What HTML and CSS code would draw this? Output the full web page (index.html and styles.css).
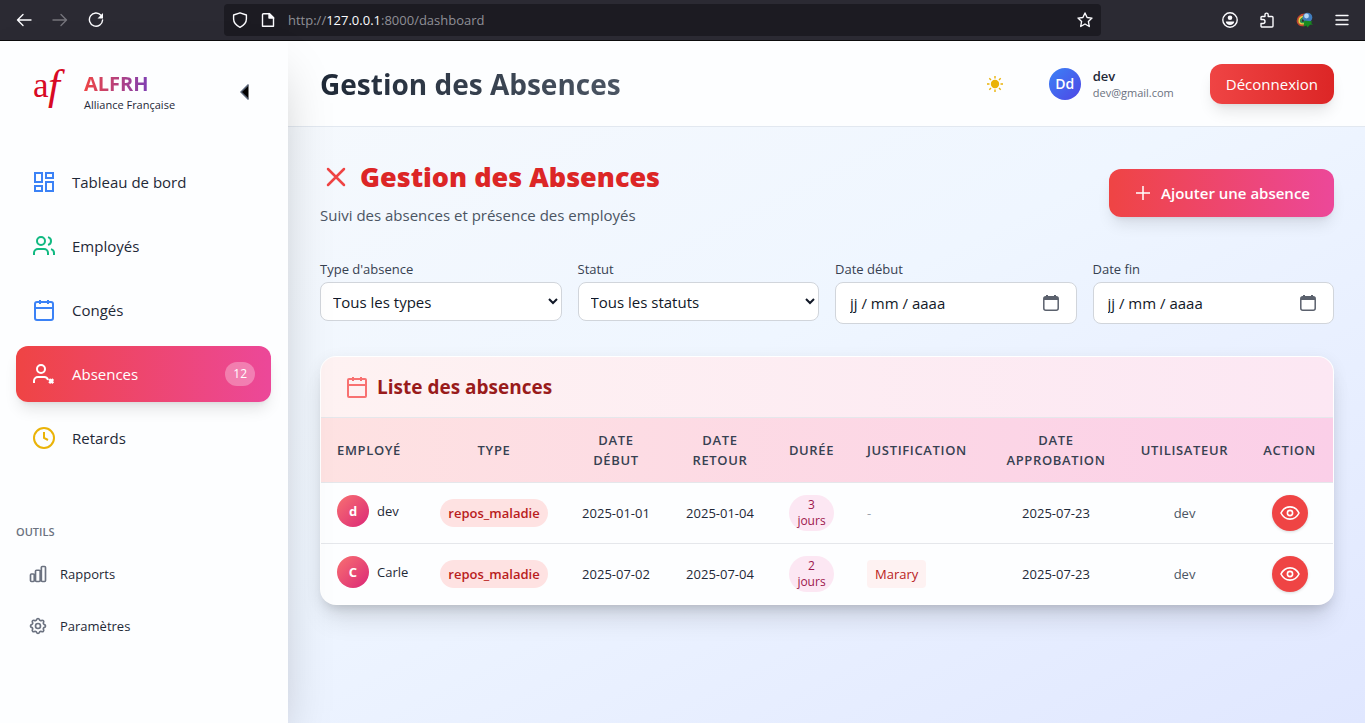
FILE: index.html
```html
<!DOCTYPE html>
<html lang="fr">
<head>
<meta charset="utf-8">
<title>Gestion des Absences</title>
<link rel="stylesheet" href="styles.css">
</head>
<body>
<div class="browser">
  <div class="nav-buttons">
    <button class="tool" aria-label="Précédent"><svg width="16" height="16" viewBox="0 0 16 16"><path d="M15 8H1.500M7 2.500 1.500 8 7 13.500"/></svg></button>
    <button class="tool dim" aria-label="Suivant"><svg width="16" height="16" viewBox="0 0 16 16"><path d="M1 8h13.500M9 2.500 14.500 8 9 13.500"/></svg></button>
    <button class="tool" aria-label="Actualiser"><svg width="16" height="16" viewBox="0 0 16 16"><path d="M13 3.300A6.600 6.600 0 1 0 14.600 8"/><path d="M15 1v5.500H9.500z" fill="currentColor" stroke="none"/></svg></button>
  </div>
  <div class="address">
    <svg width="16" height="16" viewBox="0 0 16 16"><path d="M8 .8 14.400 3v4c0 3.600-3 6.600-6.400 8.300C4.600 13.600 1.600 10.600 1.600 7V3z"/></svg>
    <svg width="16" height="16" viewBox="0 0 16 16"><path d="M3.500 1.700h6l4 4v8.600h-11V2.700a1 1 0 0 1 1-1z"/><path d="M9 1.500 13.700 6H9z" fill="currentColor"/></svg>
    <span class="url">http://<b>127.0.0.1</b>:8000/dashboard</span>
    <button class="tool star" aria-label="Marque-page"><svg width="16" height="16" viewBox="0 0 16 16"><path d="m8 1 2.100 4.500 4.900.6-3.600 3.400.9 5L8 12l-4.300 2.500.9-5L1 6.100l4.900-.6z"/></svg></button>
  </div>
  <div class="extensions">
    <button class="tool" aria-label="Compte"><svg width="16" height="16" viewBox="0 0 16 16"><circle cx="8" cy="8" r="7.200"/><circle cx="8" cy="5.800" r="2.300" fill="currentColor" stroke="none"/><path d="M3.800 9.500h8.400c0 2-2 3.600-4.200 3.600s-4.200-1.600-4.200-3.600z" fill="currentColor" stroke="none"/></svg></button>
    <button class="tool" aria-label="Extensions"><svg width="16" height="16" viewBox="0 0 16 16"><path d="M2 7.500V5.500a1 1 0 0 1 1-1h3V2.700a1.600 1.600 0 0 1 3.200 0v1.800H13a1 1 0 0 1 1 1V14a1 1 0 0 1-1 1H3a1 1 0 0 1-1-1v-2.500h2a2 2 0 0 0 0-4z"/></svg></button>
    <button class="tool" aria-label="Téléchargements"><svg class="globe" width="18" height="16" viewBox="0 0 18 16"><path d="M9 2.500C4 2.500 1.500 6 1.500 9s2.500 5 7 4" stroke="#c64530" stroke-width="1.800"/><path d="M8.500 4.300C5 4.500 3.200 6.500 3.200 9s2 3 5.300 2.600" stroke="#e7d345" stroke-width="1.800"/><path d="M8 6c-2.500.5-3.200 2-3 3.500s1.500 1.200 4 .5" stroke="#2f9e55" stroke-width="1.500"/><circle cx="11.500" cy="5.500" r="4.800" fill="#407cbd"/><circle cx="10.500" cy="4" r="2.400" fill="#b4d7f5"/><path d="m8.500 8.500 8 1-1.500 1.500 2 1.500-3 .2-2.500 2.800-1-2-3 1z" fill="#168a20"/></svg></button>
    <button class="tool" aria-label="Menu"><svg width="14" height="16" viewBox="0 0 14 16"><path d="M1 3.500h12M1 8h12M1 12.500h12"/></svg></button>
  </div>
</div>
<div class="app">
  <aside class="sidebar">
    <div class="brand">
      <svg class="logo" width="36" height="42" viewBox="0 0 36 42" role="img" aria-label="Alliance Française"><text class="logo-a" x="1" y="28">a</text><text class="logo-f" x="16" y="30">f</text></svg>
      <div class="brand-text"><div class="brand-name">ALFRH</div><div class="brand-sub">Alliance Française</div></div>
      <button class="collapse" aria-label="Réduire le menu"><svg width="10" height="18" viewBox="0 0 10 18"><path d="M8.500 2v14L1 9z" fill="#000"/><path d="M8.500 1.500 1 9l7.500 7.500" fill="none" stroke="#566175" stroke-width="1.500"/></svg></button>
    </div>
    <nav class="menu">
      <a class="item blue" href="#"><svg class="icon" viewBox="0 0 24 24"><path d="M3 3h7v9H3zM14 3h7v5h-7zM14 12h7v9h-7zM3 16h7v5H3z"/></svg>Tableau de bord</a>
      <a class="item green" href="#"><svg class="icon" viewBox="0 0 24 24"><path d="M16 21v-2a4 4 0 0 0-4-4H6a4 4 0 0 0-4 4v2M22 21v-2a4 4 0 0 0-3-3.870M16 3.130a4 4 0 0 1 0 7.750"/><circle cx="9" cy="7" r="4"/></svg>Employés</a>
      <a class="item blue" href="#"><svg class="icon" viewBox="0 0 24 24"><rect x="3" y="4" width="18" height="18" rx="2"/><path d="M8 2v4M16 2v4M3 10h18"/></svg>Congés</a>
      <a class="item active" href="#" aria-current="page"><svg class="icon" viewBox="0 0 24 24"><path d="M2 21v-2a4 4 0 0 1 4-4h6a4 4 0 0 1 4 3"/><path d="m17.200 17.200 4 4M21.200 17.200l-4 4" stroke-width="2.600"/><circle cx="9" cy="7" r="4"/></svg>Absences<span class="count">12</span></a>
      <a class="item yellow" href="#"><svg class="icon" viewBox="0 0 24 24"><circle cx="12" cy="12" r="10"/><path d="M12 6v6l4 2"/></svg>Retards</a>
    </nav>
    <div class="tools-title">OUTILS</div>
    <nav class="tools">
      <a href="#"><svg class="small-icon" viewBox="0 0 24 24"><path d="M3 13.100C3 12.500 3.500 12 4.100 12h2.300c.6 0 1.100.5 1.100 1.100v6.800c0 .6-.5 1.100-1.100 1.100H4.100C3.500 21 3 20.500 3 19.900zM9 8.600c0-.6.500-1.100 1.200-1.100h3.200c.7 0 1.200.5 1.200 1.100v11.300c0 .6-.5 1.100-1.200 1.100h-3.200C9.500 21 9 20.500 9 19.900zM16 4.100c0-.6.500-1.100 1.100-1.100h2.800c.6 0 1.100.5 1.100 1.100v15.800c0 .6-.5 1.100-1.100 1.100h-2.800c-.6 0-1.100-.5-1.100-1.100z"/></svg>Rapports</a>
      <a href="#"><svg class="small-icon" viewBox="0 0 24 24"><path d="M10.325 4.317c.426-1.756 2.924-1.756 3.350 0a1.724 1.724 0 0 0 2.573 1.066c1.543-.94 3.310.826 2.370 2.370a1.724 1.724 0 0 0 1.065 2.572c1.756.426 1.756 2.924 0 3.350a1.724 1.724 0 0 0-1.066 2.573c.94 1.543-.826 3.310-2.370 2.370a1.724 1.724 0 0 0-2.572 1.065c-.426 1.756-2.924 1.756-3.350 0a1.724 1.724 0 0 0-2.573-1.066c-1.543.94-3.310-.826-2.370-2.370a1.724 1.724 0 0 0-1.065-2.572c-1.756-.426-1.756-2.924 0-3.350a1.724 1.724 0 0 0 1.066-2.573c-.94-1.543.826-3.310 2.370-2.370.996.608 2.296.07 2.572-1.065z"/><circle cx="12" cy="12" r="3"/></svg>Paramètres</a>
    </nav>
  </aside>
  <div class="content">
    <header class="topbar">
      <h1>Gestion des Absences</h1>
      <button class="theme" aria-label="Changer de thème"><svg width="16" height="16" viewBox="0 0 16 16"><circle cx="8" cy="8" r="4.200" fill="#eab308"/><path d="M8 0v2.500M8 13.500V16M0 8h2.500M13.500 8H16M2.300 2.300 4 4M12 12l1.700 1.700M2.300 13.700 4 12M12 4l1.700-1.700" stroke="#eab308" stroke-width="1.400"/></svg></button>
      <div class="user"><span class="avatar">Dd</span><div><div class="user-name">dev</div><div class="user-mail">dev@gmail.com</div></div></div>
      <button class="logout">Déconnexion</button>
    </header>
    <main>
      <section class="intro">
        <div>
          <h2><svg width="32" height="32" viewBox="0 0 32 32"><path d="m8 8 16 16M24 8 8 24"/></svg>Gestion des Absences</h2>
          <p>Suivi des absences et présence des employés</p>
        </div>
        <button class="add"><svg width="20" height="20" viewBox="0 0 20 20"><path d="M10 3v14M3 10h14"/></svg>Ajouter une absence</button>
      </section>
      <form class="filters">
        <div class="field"><label for="type">Type d'absence</label><select id="type"><option>Tous les types</option></select></div>
        <div class="field"><label for="status">Statut</label><select id="status"><option>Tous les statuts</option></select></div>
        <div class="field"><label for="from">Date début</label><div class="date"><input id="from" type="text" value="jj / mm / aaaa"><svg width="16" height="18" viewBox="0 0 16 18"><rect x=".8" y="2.800" width="14.400" height="13.400" rx="2"/><path d="M1 3h14v3H1zM3 1h2v3H3zM11 1h2v3h-2z" fill="#5b616d" stroke="none"/></svg></div></div>
        <div class="field"><label for="to">Date fin</label><div class="date"><input id="to" type="text" value="jj / mm / aaaa"><svg width="16" height="18" viewBox="0 0 16 18"><rect x=".8" y="2.800" width="14.400" height="13.400" rx="2"/><path d="M1 3h14v3H1zM3 1h2v3H3zM11 1h2v3h-2z" fill="#5b616d" stroke="none"/></svg></div></div>
      </form>
      <section class="card">
        <h3><svg class="icon" viewBox="0 0 24 24"><rect x="3" y="4" width="18" height="18" rx="1"/><path d="M8 2v4M16 2v4M3 10h18"/></svg>Liste des absences</h3>
        <table>
          <colgroup><col class="c-emp"><col class="c-type"><col class="c-date"><col class="c-date"><col class="c-dur"><col class="c-just"><col class="c-app"><col class="c-user"><col class="c-act"></colgroup>
          <thead><tr><th class="left">EMPLOYÉ</th><th>TYPE</th><th>DATE<br>DÉBUT</th><th>DATE<br>RETOUR</th><th>DURÉE</th><th class="left">JUSTIFICATION</th><th>DATE<br>APPROBATION</th><th>UTILISATEUR</th><th>ACTION</th></tr></thead>
          <tbody>
            <tr><td><div class="person"><span class="initial">d</span>dev</div></td><td><span class="kind">repos_maladie</span></td><td>2025-01-01</td><td>2025-01-04</td><td><span class="days">3<br>jours</span></td><td class="left none">-</td><td>2025-07-23</td><td class="by">dev</td><td><button class="view" aria-label="Voir"><svg width="20" height="20" viewBox="0 0 20 20"><path d="M1 10C5 1.800 15 1.800 19 10 15 18.200 5 18.200 1 10z"/><circle cx="10" cy="10" r="2.600"/></svg></button></td></tr>
            <tr><td><div class="person"><span class="initial">C</span>Carle</div></td><td><span class="kind">repos_maladie</span></td><td>2025-07-02</td><td>2025-07-04</td><td><span class="days">2<br>jours</span></td><td class="left"><span class="reason">Marary</span></td><td>2025-07-23</td><td class="by">dev</td><td><button class="view" aria-label="Voir"><svg width="20" height="20" viewBox="0 0 20 20"><path d="M1 10C5 1.800 15 1.800 19 10 15 18.200 5 18.200 1 10z"/><circle cx="10" cy="10" r="2.600"/></svg></button></td></tr>
          </tbody>
        </table>
      </section>
    </main>
  </div>
</div>
</body>
</html>
```
FILE: styles.css
```css
* { box-sizing: border-box; }
body { margin: 0; min-height: 100vh; display: flex; flex-direction: column; font: 15px/24px "Open Sans", "Noto Sans", sans-serif; color: #1f2937; }
button, input, select { font: inherit; }
button { border: 0; padding: 0; background: none; cursor: pointer; }
h1, h2, h3, p { margin: 0; }
a { color: inherit; text-decoration: none; }
svg { display: block; flex: none; }

.browser { display: flex; align-items: center; height: 41px; background: #2b2a33; border-bottom: 1px solid #0c0c0d; color: #fbfbfe; }
.browser svg { fill: none; stroke: currentColor; stroke-width: 1.400; stroke-linejoin: round; stroke-linecap: round; }
.tool { color: #fbfbfe; }
.dim { color: #75747b; }
.nav-buttons { display: flex; gap: 20px; width: 224px; padding-left: 16px; }
.address { flex: 1; display: flex; align-items: center; gap: 12px; height: 32px; padding: 0 8px; border-radius: 4px; background: #1c1b22; }
.url { font-size: 13px; color: #8f8f96; }
.url b { font-weight: 400; color: #fbfbfe; }
.star { margin-left: auto; }
.extensions { display: flex; align-items: center; gap: 21px; width: 264px; padding: 0 16px; justify-content: flex-end; }
.browser .globe { stroke: none; }

.app { flex: 1; display: flex; background: linear-gradient(to bottom right, #f8fafc 0%, #eff6ff 50%, #e0e7ff 100%); }
.sidebar { position: relative; z-index: 1; flex: none; width: 288px; background: #fdfeff; box-shadow: 0 25px 50px -12px rgba(0, 0, 0, .25); }
.brand { display: flex; align-items: center; height: 97px; padding: 0 38px 0 32px; }
.logo { margin-right: 16px; overflow: visible; fill: #d80a24; font-family: "Liberation Serif", serif; }
.logo-a { font-size: 35px; }
.logo-f { font-size: 43px; font-style: italic; }
.brand-name { width: max-content; font-size: 20px; line-height: 26px; font-weight: 700; background: linear-gradient(90deg, #ef4444, #7e3fb5); background-clip: text; color: transparent; }
.brand-text { padding-top: 4px; }
.brand-sub { font-size: 11px; line-height: 16px; }
.collapse { margin-left: auto; padding-top: 4px; }
.menu { display: grid; gap: 8px; padding: 16px 17px 0 16px; }
.item { display: flex; align-items: center; height: 56px; padding: 0 16px; border-radius: 12px; }
.icon { width: 24px; height: 24px; fill: none; stroke: currentColor; stroke-width: 2; }
.item .icon { margin-right: 16px; }
.blue .icon { color: #3b82f6; }
.green .icon { color: #10b981; }
.yellow .icon { color: #eab308; }
.active { color: #fff; background: linear-gradient(90deg, #ef4444, #ec4899); box-shadow: 0 10px 15px -3px rgba(0, 0, 0, .1), 0 4px 6px -4px rgba(0, 0, 0, .1); }
.count { margin-left: auto; padding: 4px 8px; border-radius: 12px; background: rgba(255, 255, 255, .3); font-size: 12px; line-height: 16px; }
.tools-title { margin: 58px 16px 0; font-size: 11px; line-height: 16px; font-weight: 600; color: #6b7280; }
.tools { display: grid; gap: 8px; padding: 12px 16px; font-size: 13px; }
.tools a { display: flex; align-items: center; gap: 12px; height: 44px; padding: 0 12px; }
.small-icon { width: 20px; height: 20px; fill: none; stroke: #6b7280; stroke-width: 2; }

.content { flex: 1; min-width: 0; }
.topbar { display: flex; align-items: center; height: 86px; padding: 0 31px 0 32px; background: #fdfeff; border-bottom: 1px solid #e2e8f0; }
h1 { font-size: 28px; line-height: 36px; font-weight: 700; background: linear-gradient(90deg, #1f2937, #4b5563); background-clip: text; color: transparent; }
.theme { margin-left: auto; padding: 12px; }
.user { display: flex; align-items: center; gap: 12px; margin: 0 36px 0 34px; }
.avatar { display: grid; place-items: center; width: 32px; height: 32px; border-radius: 50%; color: #fff; font-size: 14px; font-weight: 600; background: linear-gradient(135deg, #3b82f6, #4f46e5); }
.user-name { font-size: 13px; line-height: 18px; font-weight: 600; }
.user-mail { font-size: 11px; line-height: 16px; color: #6b7280; }
.logout { height: 40px; padding: 0 16px; border-radius: 12px; color: #fff; background: linear-gradient(90deg, #ef4444, #dc2626); box-shadow: 0 10px 15px -3px rgba(0, 0, 0, .1), 0 4px 6px -4px rgba(0, 0, 0, .1); }

main { padding: 32px 31px 32px 32px; }
.intro { display: flex; align-items: center; justify-content: space-between; }
h2 { display: flex; align-items: center; gap: 8px; font-size: 27px; line-height: 36px; font-weight: 800; color: #dc2626; }
h2 svg { fill: none; stroke: #ef4444; stroke-width: 2.500; stroke-linecap: round; }
.intro p { margin-top: 8px; color: #4b5563; }
.add { display: flex; align-items: center; gap: 8px; height: 48px; padding: 0 24px; border-radius: 12px; color: #fff; font-weight: 600; background: linear-gradient(90deg, #ef4444, #ec4899); box-shadow: 0 10px 15px -3px rgba(0, 0, 0, .1), 0 4px 6px -4px rgba(0, 0, 0, .1); }
.add svg { fill: none; stroke: #fff; stroke-width: 1.500; }
.filters { display: grid; grid-template-columns: repeat(4, minmax(0, 1fr)); gap: 16px; align-items: start; margin-top: 32px; }
label { display: block; margin-bottom: 3px; font-size: 13px; line-height: 20px; color: #374151; }
select, .date { display: flex; width: 100%; border: 1px solid #d1d5db; border-radius: 8px; background: #fff; color: #111827; }
select { height: 39px; padding: 0 0 0 8px; }
.date { height: 42px; align-items: center; padding: 0 17px 0 14px; }
.date input { flex: 1; min-width: 0; border: 0; padding: 0; background: none; color: inherit; outline: 0; }
.date svg { fill: none; stroke: #5b616d; stroke-width: 1.500; }

.card { margin-top: 32px; border: 1px solid rgba(255, 255, 255, .8); border-radius: 16px; overflow: hidden; background: #fdfeff; box-shadow: 0 20px 25px -5px rgba(0, 0, 0, .1), 0 8px 10px -6px rgba(0, 0, 0, .1), 0 4px 16px rgba(0, 0, 0, .08); }
h3 { display: flex; align-items: center; gap: 8px; height: 61px; padding: 0 24px; border-bottom: 1px solid #e5e7eb; background: linear-gradient(90deg, #fef2f2, #fce7f3); color: #991b1b; font-size: 19px; font-weight: 700; }
h3 .icon { color: #f87171; }
table { width: 100%; table-layout: fixed; border-collapse: collapse; font-size: 13px; line-height: 20px; text-align: center; }
.c-emp { width: 103px; }
.c-type { width: 140px; }
.c-date { width: 104px; }
.c-dur { width: 79px; }
.c-just { width: 138px; }
.c-app { width: 134px; }
.c-user { width: 123px; }
.c-act { width: 87px; }
thead { background: linear-gradient(90deg, #fee2e2, #fbcfe8); }
th { height: 64px; padding: 0; font-weight: 600; letter-spacing: .05em; color: #374151; }
tbody tr { border-top: 1px solid #e5e7eb; }
td { height: 61px; padding: 0; }
.left { text-align: left; padding-left: 16px; }
th:first-child, td:first-child { padding-left: 16px; }
.person { display: flex; align-items: center; gap: 8px; padding-bottom: 4px; }
.initial { display: grid; place-items: center; width: 32px; height: 32px; border-radius: 50%; color: #fff; font-weight: 700; background: linear-gradient(135deg, #f87171, #db2777); }
.kind { display: inline-block; padding: 4px 8px; border-radius: 14px; background: #fee2e2; color: #b91c1c; font-weight: 600; }
.days { display: inline-block; padding: 2px 8px; border-radius: 18px; background: #fce7f3; color: #9d174d; font-size: 12px; line-height: 16px; }
.none { color: #9ca3af; }
.reason { display: inline-block; padding: 4px 8px; border-radius: 4px; background: #fef2f2; color: #b91c1c; }
.by { color: #4b5563; }
.view { display: inline-grid; place-items: center; width: 36px; height: 36px; border-radius: 50%; background: #ef4444; box-shadow: 0 1px 3px rgba(0, 0, 0, .15); vertical-align: middle; }
.view svg { fill: none; stroke: #fff; stroke-width: 1.600; }
```
